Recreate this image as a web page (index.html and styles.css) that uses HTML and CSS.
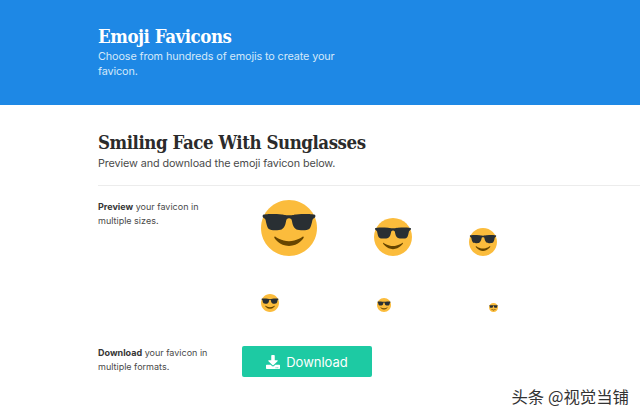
FILE: index.html
```html
<!DOCTYPE html>
<html lang="en">
<head>
<meta charset="utf-8">
<title>Emoji Favicons</title>
<link rel="stylesheet" href="styles.css">
</head>
<body>
<svg class="defs" width="0" height="0" aria-hidden="true">
  <symbol id="face" viewBox="0 0 36 36">
    <path fill="#FBBC3C" d="M36 18c0 9.941-8.059 18-18 18S0 27.941 0 18 8.059 0 18 0s18 8.059 18 18"/>
    <path fill="#292F33" d="M1.24 11.018c.24.239 1.438.957 1.677 1.675.24.717.72 4.784 2.158 5.981 1.483 1.232 7.077.774 8.148.24 2.397-1.195 2.691-4.531 3.115-6.221.239-.957 1.677-.957 1.677-.957s1.438 0 1.678.956c.424 1.691.72 5.027 3.115 6.221 1.072.535 6.666.994 8.151-.238 1.436-1.197 1.915-5.264 2.155-5.982.238-.717 1.438-1.435 1.677-1.674.241-.239.241-1.196 0-1.436-.479-.478-6.134-.904-12.223-.239-1.215.133-1.677.478-4.554.478-2.875 0-3.339-.346-4.553-.478-6.085-.666-11.741-.24-12.221.238-.239.239-.239 1.197 0 1.436z"/>
    <path fill="#664500" d="M27.335 23.629c-.178-.161-.444-.171-.635-.029-.039.029-3.922 2.9-8.7 2.9-4.766 0-8.662-2.871-8.7-2.9-.191-.142-.457-.13-.635.029-.177.16-.217.424-.094.628C8.7 24.472 11.788 29.5 18 29.5s9.301-5.028 9.429-5.243c.123-.205.084-.468-.094-.628z"/>
  </symbol>
</svg>
<header class="hero">
  <h1 class="hero-title">Emoji Favicons</h1>
  <p class="hero-text">Choose from hundreds of emojis to create your favicon.</p>
</header>
<main class="content">
  <div class="intro">
    <h2 class="intro-title">Smiling Face With Sunglasses</h2>
    <p class="intro-text">Preview and download the emoji favicon below.</p>
  </div>
  <section class="row row-preview">
    <p class="label"><strong>Preview</strong> your favicon in multiple sizes.</p>
    <div class="sizes">
      <div class="size-line size-line-large">
        <svg class="face face-56"><use href="#face"/></svg>
        <svg class="face face-38"><use href="#face"/></svg>
        <svg class="face face-28"><use href="#face"/></svg>
      </div>
      <div class="size-line size-line-small">
        <svg class="face face-18"><use href="#face"/></svg>
        <svg class="face face-14"><use href="#face"/></svg>
        <svg class="face face-9"><use href="#face"/></svg>
      </div>
    </div>
  </section>
  <section class="row row-download">
    <p class="label"><strong>Download</strong> your favicon in multiple formats.</p>
    <a class="button" href="#">
      <svg class="button-icon" viewBox="0 0 512 512"><path fill="currentColor" d="M216 0h80c13.3 0 24 10.7 24 24v168h87.7c17.8 0 26.7 21.5 14.1 34.1L269.7 378.3c-7.5 7.5-19.8 7.5-27.3 0L90.1 226.1c-12.6-12.6-3.7-34.1 14.1-34.1H192V24c0-13.3 10.7-24 24-24zm296 376v112c0 13.3-10.7 24-24 24H24c-13.3 0-24-10.7-24-24V376c0-13.3 10.7-24 24-24h146.7l49 49c20.1 20.1 52.5 20.1 72.6 0l49-49H488c13.3 0 24 10.7 24 24zm-124 88c0-11-9-20-20-20s-20 9-20 20 9 20 20 20 20-9 20-20zm64 0c0-11-9-20-20-20s-20 9-20 20 9 20 20 20 20-9 20-20z"/></svg>
      <span>Download</span>
    </a>
  </section>
</main>
<div class="watermark">头条 @视觉当铺</div>
</body>
</html>
```
FILE: styles.css
```css
* { box-sizing: border-box; }
html, body { margin: 0; height: 100%; }
body {
  position: relative;
  overflow: hidden;
  background: #fff;
  color: #4a4a4a;
  font-family: Inter, "Noto Sans", sans-serif;
}
.defs { position: absolute; }
.hero {
  height: 105px;
  padding: 25px 0 0 98px;
  background: #1e88e5;
  color: #fff;
}
.hero-title {
  margin: 0;
  font: 700 18.5px/24px "DejaVu Serif", serif;
  font-stretch: condensed;
  letter-spacing: -0.45px;
}
.hero-text {
  width: 250px;
  margin: 0;
  font-size: 10.8px;
  letter-spacing: -0.1px;
  line-height: 15px;
  color: #d4e8fa;
}
.content { padding: 25px 0 0 98px; }
.intro { padding-bottom: 14px; border-bottom: 1px solid #ececec; }
.intro-title {
  margin: 0;
  font: 700 18.5px/26px "DejaVu Serif", serif;
  font-stretch: condensed;
  letter-spacing: -0.45px;
  color: #2b2b2b;
}
.intro-text { margin: 0; font-size: 10.8px; letter-spacing: -0.1px; line-height: 15px; color: #4a4a4a; }
.row { display: flex; }
.row-preview { padding-top: 14px; }
.row-download { padding-top: 34px; }
.label {
  flex: none;
  width: 144px;
  margin: 0;
  padding: 0 20px 0 0;
  font-size: 9px;
  line-height: 14px;
  color: #4a4a4a;
}
.label strong { font-weight: 700; color: #363636; }
.sizes { padding: 0 0 0 19px; }
.size-line { display: flex; align-items: flex-end; }
.size-line-large { gap: 57px; }
.size-line-small { gap: 98px; margin-top: 38px; }
.face { display: block; }
.face-56 { width: 56px; height: 56px; }
.face-38 { width: 38px; height: 38px; }
.face-28 { width: 28px; height: 28px; }
.face-18 { width: 18px; height: 18px; }
.face-14 { width: 14px; height: 14px; }
.face-9 { width: 9px; height: 9px; }
.button {
  display: flex;
  align-items: center;
  justify-content: center;
  gap: 6px;
  width: 130px;
  height: 31px;
  border-radius: 2px;
  background: #1dcaa3;
  color: #fff;
  font-size: 13px;
  text-decoration: none;
}
.button-icon { width: 14px; height: 14px; }
.watermark {
  position: absolute;
  right: 11px;
  bottom: 10px;
  font: 16.4px/20px "Noto Sans CJK SC", sans-serif;
  color: #333;
}
```
